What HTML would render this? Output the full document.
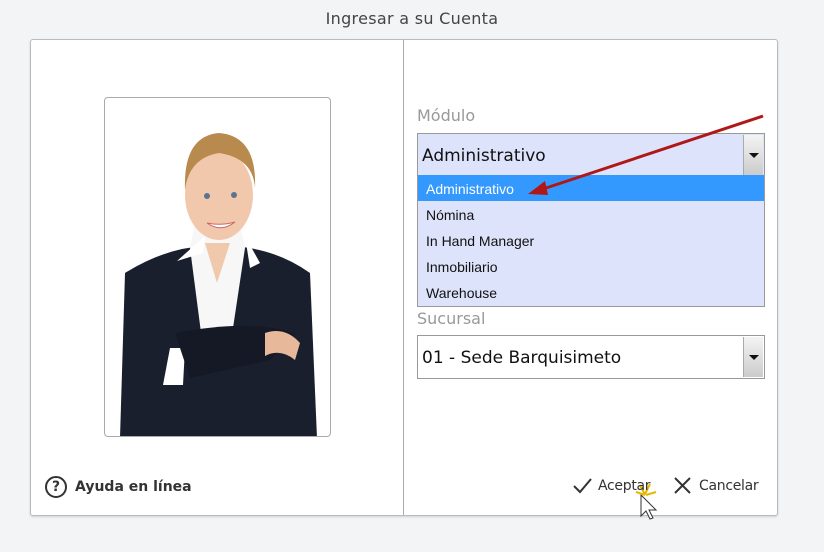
<!DOCTYPE html>
<html><head><meta charset="utf-8"><style>
*{margin:0;padding:0;box-sizing:border-box}
body{width:824px;height:552px;background:#f3f4f6;font-family:"DejaVu Sans","Liberation Sans",sans-serif;position:relative;overflow:hidden}
.t{position:absolute;top:9px;left:0;width:824px;text-align:center;font-size:16px;color:#444;letter-spacing:0.3px}
.panel{position:absolute;left:30px;top:39px;width:748px;height:477px;background:#fff;border:1px solid #bbb;border-radius:3px;box-shadow:0 1px 2px rgba(0,0,0,.15)}
.div{position:absolute;left:403px;top:40px;width:1px;height:475px;background:#aaa}
.photo{position:absolute;left:104px;top:97px;width:227px;height:340px;border:1px solid #aaa;border-radius:4px;overflow:hidden;background:#fff}
.lbl{position:absolute;left:417px;font-size:16px;color:#999}
.sel{position:absolute;left:417px;width:348px;height:44px;border:1px solid #999;font-size:17px;color:#111;padding:12px 0 0 4px}
.btn{position:absolute;right:1px;top:1px;width:20px;height:40px;background:linear-gradient(#f4f4f4,#ccc);border-left:1px solid #aaa}
.btn:after{content:"";position:absolute;left:5px;top:18px;border-left:5px solid transparent;border-right:5px solid transparent;border-top:5px solid #111}
.list{position:absolute;left:417px;top:175px;width:348px;height:132px;background:#dde3fb;border:1px solid #999;border-top:none;font-family:"Liberation Sans",sans-serif;font-size:14px;color:#111}
.list div{height:26px;line-height:28px;padding-left:8px}
.list .a{background:#3399ff;color:#fff}
.help{position:absolute;left:45px;top:476px;font-size:14px;font-weight:bold;color:#333}
.q{display:inline-block;width:22px;height:22px;border:2px solid #333;border-radius:50%;text-align:center;line-height:18px;font-size:14px;vertical-align:middle;margin-right:8px}
.ac{position:absolute;top:478px;font-size:14px;color:#333;letter-spacing:-0.3px}
</style></head><body>
<div class="t">Ingresar a su Cuenta</div>
<div class="panel"></div>
<div class="div"></div>
<div class="photo"><svg width="227" height="340" viewBox="0 0 227 340">
<path d="M20 175 Q60 150 100 148 L125 148 Q170 150 205 175 L212 340 L15 340 Z" fill="#1a1f2e"/>
<path d="M90 125 L135 125 L140 150 L125 250 L110 255 L98 250 L85 150 Z" fill="#f7f7f7"/>
<path d="M72 163 L100 138 L98 155 Z M155 165 L140 138 L145 170 Z" fill="#fff"/>
<path d="M100 145 L112 185 L125 145 Z" fill="#f0c9ad"/>
<path d="M65 250 L80 250 L78 287 L58 287 Z" fill="#fff"/>
<path d="M70 235 Q150 220 190 236 L165 262 L85 280 Z" fill="#141925"/>
<path d="M160 235 Q180 228 195 245 L190 262 Q175 250 160 258 Z" fill="#e8b89a"/>
<ellipse cx="114" cy="97" rx="34" ry="45" fill="#f2c8ad"/>
<path d="M80 92 Q78 38 114 35 Q152 38 150 90 Q148 60 114 55 Q84 60 80 92 Z" fill="#b98a4e"/>
<circle cx="102" cy="98" r="3" fill="#5a7390"/><circle cx="129" cy="97" r="3" fill="#5a7390"/>
<path d="M102 125 Q116 135 130 124 Q116 128 102 125 Z" fill="#fff" stroke="#c66" stroke-width="1"/>
</svg></div>
<div class="lbl" style="top:106px">Módulo</div>
<div class="sel" style="top:133px;background:#dde3fb">Administrativo<div class="btn"></div></div>
<div class="list"><div class="a">Administrativo</div><div>Nómina</div><div>In Hand Manager</div><div>Inmobiliario</div><div>Warehouse</div></div>
<div class="lbl" style="top:309px">Sucursal</div>
<div class="sel" style="top:335px;background:#fff">01 - Sede Barquisimeto<div class="btn"></div></div>
<svg style="position:absolute;left:0;top:0" width="824" height="552"><line x1="763" y1="116" x2="540" y2="190" stroke="#b01818" stroke-width="3"/><path d="M528 194 L545 181 L548 195 Z" fill="#b01818"/>
<path d="M574 486 L580 492 L591 479" stroke="#333" stroke-width="2" fill="none"/>
<path d="M675 478 L690 493 M690 478 L675 493" stroke="#333" stroke-width="2"/>
<path d="M641 495 L641 516 L646 511 L650 519 L653 518 L649 510 L656 510 Z" fill="#fff" stroke="#333"/>
<path d="M640 485 L645 495 M650 484 L645 494 M636 492 L645 495 M656 492 L646 495" stroke="#e8b800" stroke-width="2"/></svg>
<div class="help"><span class="q">?</span>Ayuda en línea</div>
<div class="ac" style="left:598px">Aceptar</div>
<div class="ac" style="left:699px">Cancelar</div>
</body></html>
